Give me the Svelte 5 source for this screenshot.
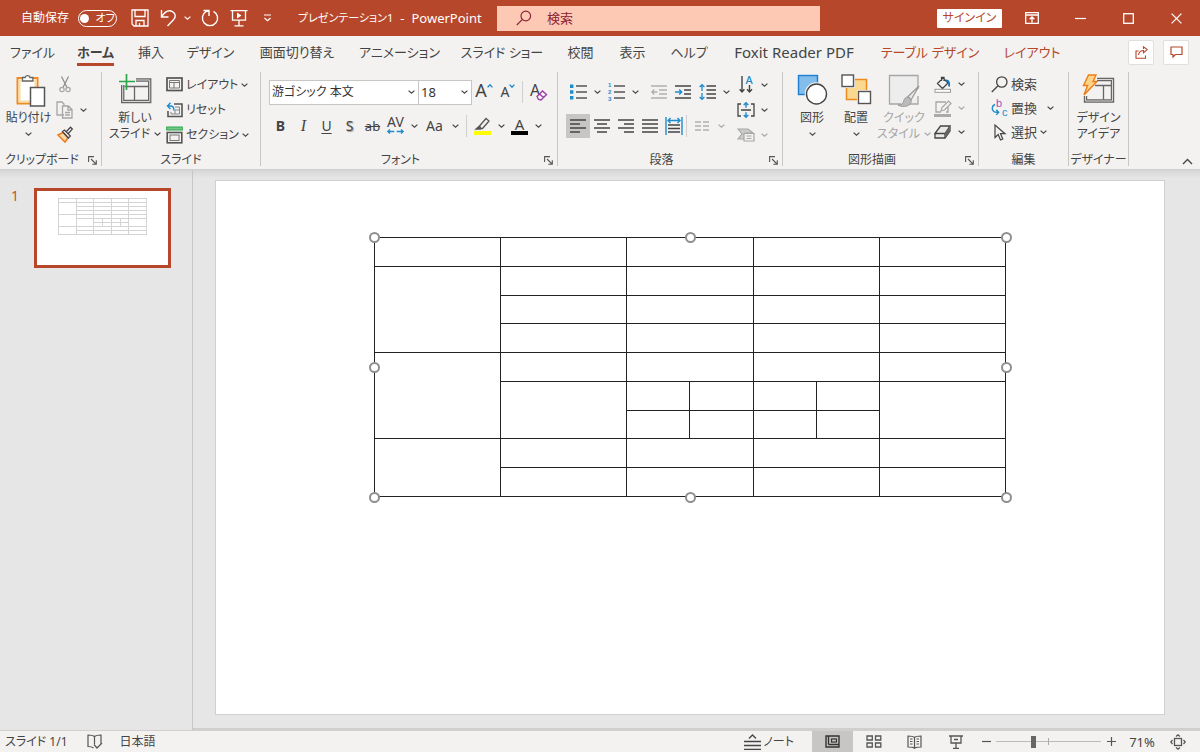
<script>
  const G = '#a6a6a6';
  const B = '#1e8bcd';

  // name: [width, height, inner markup]
  const icons = {
    chev: [7, 4, `<path d="M.6.6l2.9 2.7L6.4.6" stroke="currentColor" stroke-width="1.2"/>`],
    save: [18, 18, `<path d="M1 1h16v16H3l-2-2zM4 1v6.500h10V1M5 17v-5.500h8V17M8.500 17v-3" stroke="#fff" stroke-width="1.300"/>`],
    undo: [17, 18, `<path d="M1.500 1v7h7M1.800 7.700C5 2.500 9 .8 12.500 2.700c3.500 2 3.500 5.500 1 8L7.500 17" stroke="#fff" stroke-width="1.400"/>`],
    redo: [18, 18, `<path d="M2.500 1.500H8v5.500M12.500 2.300A7.600 7.600 0 1 1 5.300 2.400L8 1.500" stroke="#fff" stroke-width="1.400"/>`],
    present: [18, 18, `<path d="M.5 1.700h17M2.500 1.700v9.500h13V1.700M9 11v5.500M4.500 16.800h9" stroke="#fff" stroke-width="1.300"/><path d="M7 3.500v6l4.500-3z" fill="#fff"/>`],
    qat: [9, 8, `<path d="M1 1h7M1.500 4l3 2.700L7.500 4" stroke="#fff" stroke-width="1.200"/>`],
    lens: [16, 16, `<circle cx="9.800" cy="6" r="4.800" stroke="#8c2334" stroke-width="1.200"/><path d="M6.400 9.400L.8 15" stroke="#8c2334" stroke-width="1.200"/>`],
    ribbon: [14, 12, `<path d="M.7.700h12.600v10.600H.7zM.7 3h12.600M7 10.500V5M4.600 7.300L7 4.900l2.400 2.400" stroke="#fff" stroke-width="1.300"/>`],
    min: [11, 11, `<path d="M0 5.500h11" stroke="#fff" stroke-width="1.200"/>`],
    max: [11, 11, `<rect x=".7" y=".7" width="9.600" height="9.600" stroke="#fff" stroke-width="1.300"/>`],
    close: [11, 11, `<path d="M.6.600l9.800 9.800M10.400.600L.6 10.400" stroke="#fff" stroke-width="1.300"/>`],
    share: [13, 13, `<path d="M3.500 5H1v7.300h9.500V9.500M3.500 9C4 6 6 4.500 8.500 4.500V6.800L12.200 3.500 8.500.8V3" stroke="#b7472a" stroke-width="1.100"/>`],
    comment: [13, 12, `<path d="M1 1h11v7.500H5.500L3 11V8.500H1z" stroke="#b7472a" stroke-width="1.200"/>`],
    paste: [31, 34, `<path d="M1.500 4h20v25.500h-20z" fill="#fff" stroke="#f08a24" stroke-width="2"/><path d="M3.500 6.500h16v21h-16z" stroke="#fbdca0" stroke-width="2"/><path d="M6.500 7V3.500h2.700a2.500 2.500 0 0 1 4.800 0h2.900V7z" fill="#fff" stroke="#666" stroke-width="1.300"/><path d="M14.500 13.500h14V32h-14z" fill="#fff" stroke="#555" stroke-width="1.500"/>`],
    cut: [12, 17, `<path d="M2.500.5L8 11.500M9.500.5L4 11.500" stroke="#8a8a8a" stroke-width="1.200"/><circle cx="3" cy="13.500" r="2.200" stroke="${G}" stroke-width="1.200"/><circle cx="9" cy="13.500" r="2.200" stroke="${G}" stroke-width="1.200"/>`],
    copy: [17, 18, `<path d="M8 14H1V1h5l2 2v2" stroke="${G}" stroke-width="1.300"/><path d="M6.500 5h6l3.500 3.500V17H6.500zM12 5v4h4M9 11.500h5M9 14h5" stroke="${G}" stroke-width="1.300"/>`],
    brush: [18, 17, `<path d="M2 9l5-2.500L12 12l-3 4z" fill="#fcd9a8" stroke="#ed7d1a" stroke-width="1.500"/><path d="M6.500 5.500l6 6.500 1.800-2L8.500 4zM10.500 5.500l4-4.200 1.800 1.800-3.800 4.200" fill="#fff" stroke="#444" stroke-width="1.300"/>`],
    newslide: [33, 30, `<path d="M17 6h13.700v21.500h-27V11" stroke="#666" stroke-width="3.400"/><path d="M17 6h13.700v21.500h-27V11" stroke="#d8d8d8" stroke-width="1"/><path d="M5.500 12.500H29M15.500 12.500V26" stroke="#666" stroke-width="1.300"/><path d="M7.500 0v16M0 7.500h16" stroke="#2ba84a" stroke-width="1.700"/>`],
    layout: [17, 15, `<rect x="1" y="1" width="15" height="12.500" stroke="#555" stroke-width="1.700"/><path d="M3.500 5.500h10M3.500 3.500h10v7.500h-10zM8 5.500v5.500" stroke="#777"/>`],
    reset: [17, 16, `<path d="M8 2h8v12.500H2V9" stroke="#555" stroke-width="1.600"/><path d="M9 5h4.500v7H5v-2M9 8h4M9 8v4" stroke="#888"/><path d="M4.500.7L1.500 4l3 3M1.500 4h3C7 4 8 6 8 8.500" stroke="${B}" stroke-width="1.400"/>`],
    section: [17, 18, `<rect x=".7" y="1" width="15.600" height="3" fill="#79c68a" stroke="#2ba84a"/><rect x="1.200" y="6.500" width="14.600" height="10.300" stroke="#555" stroke-width="1.600"/><rect x="4" y="9" width="9" height="5.500" stroke="#777"/>`],
    launch: [9, 9, `<path d="M.6 6V.6H6M3 3l5 5M8.300 4.300v4H4.300" stroke="#555" stroke-width="1.100"/>`],
    up: [6, 4, `<path d="M.6 3.400L3 .8l2.400 2.600" stroke="${B}" stroke-width="1.400"/>`],
    down: [6, 4, `<path d="M.6.600L3 3.200 5.400.6" stroke="${B}" stroke-width="1.400"/>`],
    eraser: [18, 18, `<text x="0" y="12.500" font-size="16" fill="#444">A</text><path d="M7 13.500l5.500-5.500 4 3.500-5.500 5.500-2.500-.5zM9.500 11l4 3.500" fill="#f3f2f1" stroke="#9b3fab" stroke-width="1.400"/>`],
    av: [17, 5, `<path d="M3 .5L.8 2.500 3 4.500M.8 2.500h6.500M14 .5l2.200 2L14 4.500M16.200 2.500H9.700" stroke="${B}" stroke-width="1.300"/>`],
    marker: [18, 18, `<path d="M5.500 9L12 1.500l3 2.500-6.500 7.500H6zM5.500 9L2 12h4.500l1-.7" stroke="#555" stroke-width="1.300"/><path d="M2 12h5V9.500H5z" fill="#555"/><path d="M0 14h17v4H0z" fill="#ff0"/>`],
    bullets: [17, 16, `<path d="M0 .5h3.400v3.400H0zM0 6.300h3.400v3.400H0zM0 12.100h3.400v3.400H0z" fill="${B}"/><path d="M6 2h11M6 8h11M6 14h11" stroke="#555" stroke-width="1.400"/>`],
    numbers: [17, 18, `<g font-family="Liberation Sans, sans-serif" font-size="6" font-weight="700" fill="${B}"><text x="0" y="4">1</text><text x="0" y="11">2</text><text x="0" y="18">3</text></g><path d="M6 3h11M6 9h11M6 15h11" stroke="#555" stroke-width="1.400"/>`],
    outdent: [16, 14, `<path d="M0 1h16M8 5h8M8 9h8M0 13h16M6.500 7H.8M3.300 4.500L.8 7l2.500 2.500" stroke="#b0b0b0" stroke-width="1.300"/>`],
    indent: [16, 14, `<path d="M0 1h16M9 5h7M9 9h7M0 13h16" stroke="#444" stroke-width="1.400"/><path d="M0 7h6.500M4.200 4.500L6.700 7 4.200 9.500" stroke="${B}" stroke-width="1.400"/>`],
    spacing: [17, 16, `<path d="M7.500 2H17M7.500 6H17M7.500 10H17M7.500 14H17" stroke="#444" stroke-width="1.400"/><path d="M3 .8V7M.6 3L3 .7 5.400 3M3 9v6.200M.6 13L3 15.300 5.400 13" stroke="${B}" stroke-width="1.300"/>`],
    vert: [15, 17, `<path d="M3 0v16M.6 13.300L3 16l2.400-2.700M10.500 9v7M8 13.300l2.500 2.700 2.500-2.700" stroke="#444" stroke-width="1.400"/><text x="6.500" y="8" font-size="11" font-weight="500" fill="${B}">A</text>`],
    valign: [18, 16, `<path d="M4 2H1v12h3M14 2h3v12h-3M4 8h10" stroke="#444" stroke-width="1.300"/><path d="M9 .8v5M6.700 3L9 .8 11.300 3M9 15.200v-5M6.700 13L9 15.200 11.300 13" stroke="${B}" stroke-width="1.400"/>`],
    smart: [18, 14, `<path d="M1 1h10l5 4H8v6H1l4-5z" fill="#ccc" stroke="${G}" stroke-width="1.100"/><path d="M7 5.500h10V13H7zM9.500 8h5M9.500 10.500h5" fill="#f3f2f1" stroke="${G}" stroke-width="1.200"/>`],
    left: [16, 16, `<path d="M0 2h16M0 6h10M0 10h16M0 14h10" stroke="#444" stroke-width="1.400"/>`],
    center: [16, 16, `<path d="M0 2h16M3 6h10M0 10h16M3 14h10" stroke="#444" stroke-width="1.400"/>`],
    right: [16, 16, `<path d="M0 2h16M6 6h10M0 10h16M6 14h10" stroke="#444" stroke-width="1.400"/>`],
    justify: [16, 16, `<path d="M0 2h16M0 6h16M0 10h16M0 14h16" stroke="#444" stroke-width="1.400"/>`],
    distribute: [18, 18, `<path d="M1 0v18M17 0v18M3 3.500h12M5.500 1L3 3.500 5.500 6M12.500 1L15 3.500 12.500 6" stroke="${B}" stroke-width="1.400"/><path d="M3 8h12M3 11.500h12M3 15h12" stroke="#444" stroke-width="1.400"/>`],
    columns: [14, 10, `<path d="M0 1h6M8 1h6M0 5h6M8 5h6M0 9h6M8 9h6" stroke="#b0b0b0" stroke-width="1.300"/>`],
    shapes: [31, 32, `<rect x="1.500" y="1.500" width="19" height="19" fill="#83bdec" stroke="#1e7fd0" stroke-width="1.400"/><circle cx="19.500" cy="20" r="10.300" fill="#fff" stroke="#f3f2f1" stroke-width="3"/><circle cx="19.500" cy="20" r="10" fill="#fff" stroke="#444" stroke-width="1.400"/>`],
    arrange: [31, 31, `<rect x="5.500" y="5.500" width="20" height="20" fill="#fbd88f" stroke="#ed8b1c" stroke-width="1.500"/><rect x="0" y="0" width="14" height="14" fill="#f3f2f1"/><rect x="16" y="16" width="15" height="15" fill="#f3f2f1"/><rect x="1" y="1" width="11.500" height="11.500" fill="#fff" stroke="#555" stroke-width="1.400"/><rect x="17.500" y="17.500" width="12" height="12" fill="#fff" stroke="#555" stroke-width="1.400"/>`],
    quick: [32, 33, `<path d="M13 30H1.500V1.500h28.500V15M30 22v8h-9" fill="#ededed" stroke="${G}" stroke-width="1.300"/><path d="M31 12L20 22.500l3 3.500z" fill="#e8e8e8" stroke="#999" stroke-width="1.300"/><path d="M20 23c-4 0-4 4-5 6-1 1.500-3 2-5 2 3 2 10 2 12-1 1.500-2 1.500-3 .5-4.500z" fill="#bbb" stroke="#999"/>`],
    fill: [18, 17, `<path d="M3.500 7.500L9 2l5 5-5.500 5.500zM7.500 5V1.500h2.500V5" stroke="#444" stroke-width="1.300"/><path d="M12 4.500c3 0 3.500 2.500 3 6" stroke="#1874b8" stroke-width="1.800"/><rect x="1" y="13.300" width="15.500" height="3" fill="#fff" stroke="#999"/>`],
    outline: [18, 17, `<path d="M12 2H2v10h5M14 7v5h-2" stroke="${G}" stroke-width="1.300"/><path d="M7 11l1-3.500L14.500 1 17 3.500 10.500 10z" fill="#f3f2f1" stroke="${G}" stroke-width="1.200"/><path d="M0 14h17v3H0z" fill="#aaa"/>`],
    effects: [17, 14, `<path d="M1 8.500L6.500 1H16l-5 7.500zM1 8.500V13h10V8.500zM11 13l5-7V1" fill="#e8e8e8" stroke="#444" stroke-width="1.300"/><path d="M11 8.500L16 1v5l-5 7z" fill="#666"/>`],
    find: [17, 17, `<circle cx="10.800" cy="6" r="5.200" stroke="#444" stroke-width="1.300"/><path d="M7 9.800L.8 16" stroke="#444" stroke-width="1.300"/>`],
    replace: [17, 18, `<g font-family="Liberation Sans, sans-serif" font-size="11"><text x="5" y="8" fill="#ad4bbd">b</text><text x="11" y="17" fill="${B}">c</text></g><path d="M4 5.500C1 6.500.2 10.500 2.800 12.500 4 13.500 5.500 13.300 7.500 13.300M5.300 10.800l2.400 2.500-2.400 2.600" stroke="${B}" stroke-width="1.400"/>`],
    select: [12, 17, `<path d="M1 1v12.500l3.200-3 2.300 5.500 2.300-1L6.500 9.700H11z" stroke="#444" stroke-width="1.200"/>`],
    ideas: [33, 31, `<path d="M15 5.500h15.500v21.500h-27V22" stroke="#666" stroke-width="3.400"/><path d="M15 5.500h15.500v21.500h-27V22" stroke="#d8d8d8" stroke-width="1"/><path d="M13 11.500h16M21.500 11.500V25.500" stroke="#666" stroke-width="1.300"/><path d="M6.500 1h7.500l-3 6.500h4L2 21l3.500-9.500H1.500z" fill="#fcd488" stroke="#ed7d1a" stroke-width="1.400"/>`],
    collapse: [11, 7, `<path d="M1 6l4.500-4.500L10 6" stroke="#444" stroke-width="1.300"/>`],
    proof: [16, 15, `<path d="M7.500 2.500C6 1.200 3.500 1 1 1v11.500c2.500 0 4 .2 5.500 1.500M7.500 2.500V10M7.500 2.500C9 1.200 11.500 1 14 1v8.500M7 10.500l3 3.500 5-5" stroke="#555" stroke-width="1.200"/>`],
    notes: [17, 16, `<path d="M5 4.500L8.500 1 12 4.500M0 7.500h17M0 11.500h17M0 15.300h17" stroke="#444" stroke-width="1.300"/>`],
    normal: [15, 13, `<path d="M1 1h13v11H1zM3.500 1v8.500M3.500 9.500H14" stroke="#333" stroke-width="1.400"/><rect x="6.500" y="4" width="5" height="3" stroke="#333" stroke-width="1.200"/>`],
    sorter: [16, 13, `<path d="M1 1h5.300v4H1zM9.500 1h5.300v4H9.500zM1 8h5.300v4H1zM9.500 8h5.300v4H9.500z" stroke="#555" stroke-width="1.300"/>`],
    reading: [15, 14, `<path d="M7.500 2.500C6 1 3.500 1 1 1v11c2.500 0 5 0 6.500 1.300C9 12 11.500 12 14 12V1c-2.500 0-5 0-6.500 1.500zM7.500 2.500v11M3 4h2.500M3 6.500h2.500M3 9h2.500M9.500 4H12M9.500 6.500H12M9.500 9H12" stroke="#555" stroke-width="1.200"/>`],
    show: [14, 14, `<path d="M0 1h14M2 1v7h10V1M7 8v5M4 13.300h6M5 4.500h4" stroke="#555" stroke-width="1.300"/>`],
    minus: [9, 9, `<path d="M0 4.500h9" stroke="#555" stroke-width="1.200"/>`],
    plus: [9, 9, `<path d="M0 4.500h9M4.500 0v9" stroke="#555" stroke-width="1.200"/>`],
    fit: [16, 16, `<rect x="4.500" y="4.500" width="7" height="7" stroke="#555" stroke-width="1.300"/><path d="M6 2.500L8 .8l2 1.700M6 13.500l2 1.700 2-1.700M2.500 6L.8 8l1.700 2M13.500 6l1.700 2-1.700 2" stroke="#555" stroke-width="1.200"/>`]
  };

  const tabs = ['ファイル', 'ホーム', '挿入', 'デザイン', '画面切り替え', 'アニメーション', 'スライド ショー', '校閲', '表示', 'ヘルプ', 'Foxit Reader PDF', 'テーブル デザイン', 'レイアウト'];

  // [column span, row span] of every cell, row by row
  const full = [[1, 1], [2, 1], [2, 1], [1, 1]];
  const rows = [
    [[1, 1], ...full],
    [[1, 3], ...full],
    full,
    full,
    [[1, 3], ...full],
    [[1, 2], [1, 1], [1, 1], [1, 1], [1, 1], [1, 2]],
    [[1, 1], [1, 1], [1, 1], [1, 1]],
    [[1, 2], ...full],
    full
  ];
  const handles = ['nw', 'n', 'ne', 'w', 'e', 'sw', 's', 'se'];
  let zoom = $state(35);
</script>

{#snippet ico(name)}
  <span class="ico" aria-hidden="true">{@html `<svg width="${icons[name][0]}" height="${icons[name][1]}" viewBox="0 0 ${icons[name][0]} ${icons[name][1]}" fill="none">${icons[name][2]}</svg>`}</span>
{/snippet}

{#snippet drop(label, off = false)}
  <button class="drop" class:off aria-label={label}>{@render ico('chev')}</button>
{/snippet}

{#snippet tool(name, label)}
  <button class="tool" aria-label={label}>{@render ico(name)}</button>
{/snippet}

{#snippet foot(label, launcher)}
  <footer><h2>{label}</h2>{#if launcher}<button class="launch" aria-label="{label}の設定">{@render ico('launch')}</button>{/if}</footer>
{/snippet}

{#snippet grid()}
  <table aria-label="表">
    <colgroup><col class="wide" /><col class="wide" /><col /><col /><col /><col /><col class="wide" /></colgroup>
    <tbody>
      {#each rows as row}
        <tr>{#each row as [c, r]}<td colspan={c} rowspan={r}></td>{/each}</tr>
      {/each}
    </tbody>
  </table>
{/snippet}

<div class="app">
  <header class="titlebar">
    <div class="quick">
      <span class="auto" id="autosave">自動保存</span>
      <button class="switch" role="switch" aria-checked="false" aria-labelledby="autosave"><i></i>オフ</button>
      <button class="q save" aria-label="上書き保存">{@render ico('save')}</button>
      <button class="q" aria-label="元に戻す">{@render ico('undo')}</button>
      <button class="q thin" aria-label="元に戻す履歴">{@render ico('chev')}</button>
      <button class="q" aria-label="やり直し">{@render ico('redo')}</button>
      <button class="q" aria-label="最初から">{@render ico('present')}</button>
      <button class="q" aria-label="ツール バーのカスタマイズ">{@render ico('qat')}</button>
      <h1><span class="doc">プレゼンテーション1</span><span>-</span><span>PowerPoint</span></h1>
    </div>
    <label class="search">{@render ico('lens')}<input type="text" placeholder="検索" aria-label="検索" /></label>
    <div class="window">
      <button class="signin">サインイン</button>
      <button aria-label="リボンの表示オプション">{@render ico('ribbon')}</button>
      <button aria-label="最小化">{@render ico('min')}</button>
      <button aria-label="最大化">{@render ico('max')}</button>
      <button aria-label="閉じる">{@render ico('close')}</button>
    </div>
  </header>

  <nav>
    <div class="tabs">
      {#each tabs as tab, i}
        <button class:active={i === 1} class:latin={i === 10} class:context={i > 10}><span>{tab}</span></button>
      {/each}
    </div>
    <button class="card" aria-label="共有">{@render ico('share')}</button>
    <button class="card" aria-label="コメント">{@render ico('comment')}</button>
  </nav>

  <div class="ribbon">
    <section class="clipboard">
      <div class="body">
        <button class="big">{@render ico('paste')}<span>貼り付け</span><span>{@render ico('chev')}</span></button>
        <div class="stack">
          <div>{@render tool('cut', '切り取り')}</div>
          <div>{@render tool('copy', 'コピー')}{@render drop('コピーのオプション')}</div>
          <div>{@render tool('brush', '書式のコピー')}</div>
        </div>
      </div>
      {@render foot('クリップボード', true)}
    </section>

    <section class="slides">
      <div class="body">
        <button class="big">{@render ico('newslide')}<span>新しい</span><span>スライド {@render ico('chev')}</span></button>
        <div class="stack">
          <button class="line">{@render ico('layout')}レイアウト{@render ico('chev')}</button>
          <button class="line">{@render ico('reset')}リセット</button>
          <button class="line">{@render ico('section')}セクション{@render ico('chev')}</button>
        </div>
      </div>
      {@render foot('スライド', false)}
    </section>

    <section class="font">
      <div class="body two">
        <div class="row">
          <span class="combo name"><select aria-label="フォント"><option>游ゴシック 本文</option></select>{@render ico('chev')}</span>
          <span class="combo size"><select aria-label="フォント サイズ"><option>18</option></select>{@render ico('chev')}</span>
          <button class="grow" aria-label="フォント サイズの拡大">A{@render ico('up')}</button>
          <button class="grow small" aria-label="フォント サイズの縮小">A{@render ico('down')}</button>
          <hr />
          {@render tool('eraser', '書式のクリア')}
        </div>
        <div class="row letters">
          <button class="tool"><b>B</b></button>
          <button class="tool"><i class="it">I</i></button>
          <button class="tool"><u>U</u></button>
          <button class="tool"><span class="shadow">S</span></button>
          <button class="tool"><s>ab</s></button>
          <button class="tool av">AV{@render ico('av')}</button>
          {@render drop('文字の間隔')}
          <button class="tool aa">Aa</button>
          {@render drop('文字種の変換')}
          <hr />
          {@render tool('marker', '蛍光ペンの色')}
          {@render drop('蛍光ペンの色の選択')}
          <button class="tool ink">A<i></i></button>
          {@render drop('フォントの色の選択')}
        </div>
      </div>
      {@render foot('フォント', true)}
    </section>

    <section class="para">
      <div class="body">
        <div class="two">
          <div class="row">
            {@render tool('bullets', '箇条書き')}{@render drop('箇条書きの種類')}
            {@render tool('numbers', '段落番号')}{@render drop('段落番号の種類')}
            <span class="gap"></span>
            {@render tool('outdent', 'インデントを減らす')}{@render tool('indent', 'インデントを増やす')}
            {@render tool('spacing', '行間')}{@render drop('行間の種類')}
          </div>
          <div class="row aligns">
            <button class="tool on" aria-label="左揃え" aria-pressed="true">{@render ico('left')}</button>
            {@render tool('center', '中央揃え')}{@render tool('right', '右揃え')}{@render tool('justify', '両端揃え')}{@render tool('distribute', '均等割り付け')}
            <hr />
            {@render tool('columns', '段の追加または削除')}{@render drop('段の種類', true)}
          </div>
        </div>
        <div class="stack">
          <div>{@render tool('vert', '文字列の方向')}{@render drop('文字列の方向の種類')}</div>
          <div>{@render tool('valign', '文字の配置')}{@render drop('文字の配置の種類')}</div>
          <div>{@render tool('smart', 'SmartArt に変換')}{@render drop('SmartArt の種類', true)}</div>
        </div>
      </div>
      {@render foot('段落', true)}
    </section>

    <section class="draw">
      <div class="body">
        <button class="big">{@render ico('shapes')}<span>図形</span><span>{@render ico('chev')}</span></button>
        <button class="big">{@render ico('arrange')}<span>配置</span><span>{@render ico('chev')}</span></button>
        <button class="big quickstyle" disabled>{@render ico('quick')}<span>クイック</span><span>スタイル {@render ico('chev')}</span></button>
        <div class="stack">
          <div>{@render tool('fill', '図形の塗りつぶし')}{@render drop('塗りつぶしの色')}</div>
          <div>{@render tool('outline', '図形の枠線')}{@render drop('枠線の色', true)}</div>
          <div>{@render tool('effects', '図形の効果')}{@render drop('効果の種類')}</div>
        </div>
      </div>
      {@render foot('図形描画', true)}
    </section>

    <section class="edit">
      <div class="body">
        <div class="stack">
          <button class="line">{@render ico('find')}検索</button>
          <button class="line far">{@render ico('replace')}置換{@render ico('chev')}</button>
          <button class="line">{@render ico('select')}選択{@render ico('chev')}</button>
        </div>
      </div>
      {@render foot('編集', false)}
    </section>

    <section class="ideas">
      <div class="body">
        <button class="big">{@render ico('ideas')}<span>デザイン</span><span>アイデア</span></button>
      </div>
      {@render foot('デザイナー', false)}
    </section>
    <button class="fold" aria-label="リボンを折りたたむ">{@render ico('collapse')}</button>
  </div>

  <main>
    <aside>
      <span class="num">1</span>
      <div class="thumb">{@render grid()}</div>
    </aside>
    <div class="stage">
      <div class="slide">
        <div class="frame">
          {@render grid()}
          {#each handles as h}<i class="handle {h}"></i>{/each}
        </div>
      </div>
    </div>
  </main>

  <div class="status">
    <span>スライド 1/1</span>
    <button class="proof" aria-label="スペル チェック">{@render ico('proof')}</button>
    <span>日本語</span>
    <div class="views">
      <button class="notes">{@render ico('notes')}ノート</button>
      <button class="view on" aria-label="標準" aria-pressed="true">{@render ico('normal')}</button>
      <button class="view" aria-label="スライド一覧">{@render ico('sorter')}</button>
      <button class="view" aria-label="閲覧表示">{@render ico('reading')}</button>
      <button class="view" aria-label="スライド ショー">{@render ico('show')}</button>
      <button class="step" aria-label="縮小">{@render ico('minus')}</button>
      <input type="range" min="0" max="100" bind:value={zoom} aria-label="ズーム" />
      <button class="step" aria-label="拡大">{@render ico('plus')}</button>
      <button class="percent">71%</button>
      <button class="fit" aria-label="ウィンドウに合わせる">{@render ico('fit')}</button>
    </div>
  </div>
</div>

<style>
  :global(body) { margin: 0; }
  * { box-sizing: border-box; }
  .app {
    display: flex; flex-direction: column; min-height: 100vh;
    background: #f3f2f1; color: #444;
    font: 12px/16px "Noto Sans", "Noto Sans CJK JP", sans-serif;
    font-feature-settings: "palt";
  }
  button { padding: 0; border: 0; background: none; color: inherit; font: inherit; font-feature-settings: inherit; white-space: nowrap; }
  button, .ico { display: inline-flex; align-items: center; justify-content: center; }
  .ico { flex: none; }
  .ico :global(svg) { display: block; overflow: visible; }
  hr { width: 1px; height: 22px; margin: 0; border: 0; background: #d2d0ce; flex: none; }
  h1, h2 { margin: 0; font: inherit; }

  .titlebar { display: grid; grid-template-columns: 497px minmax(160px, 1fr) 380px; height: 36px; background: #b7472a; color: #fff; align-items: center; }
  .quick { display: flex; align-items: center; padding-left: 21px; white-space: nowrap; }
  .auto { width: 57px; }
  .switch { width: 39px; height: 17px; border: 1px solid #fff; border-radius: 9px; gap: 6px; font-size: 11px; }
  .switch i { width: 9px; height: 9px; border-radius: 50%; background: #fff; }
  .q { width: 29px; height: 28px; }
  .save { margin-left: 8px; }
  .thin { width: 8px; margin-right: 4px; }
  h1 { display: flex; gap: 7px; margin-left: 16px; font-size: 13px; }
  .doc { font-size: 11px; }
  .search { display: flex; align-items: center; height: 25px; padding-left: 19px; gap: 15px; background: #fdc9b5; }
  .search input { flex: 1; min-width: 0; border: 0; padding: 0; background: none; outline: 0; font: inherit; font-size: 13px; color: #8c2334; }
  .search input::placeholder { color: #8c2334; opacity: 1; }
  .window { display: flex; justify-content: flex-end; align-items: center; }
  .window button { width: 48px; height: 36px; }
  .window .signin { width: 65px; height: 19px; margin-right: 6px; background: #fff; color: #b7472a; border-radius: 1px; }

  nav { display: flex; align-items: center; height: 32px; padding-right: 11px; gap: 9px; }
  .tabs { flex: 1; display: grid; grid-template-columns: 65px 61px 50px 69px 104px 101px 104px 53px 51px 62px 148px 124px 80px; font-size: 13px; line-height: 20px; }
  .tabs button { height: 30px; }
  .tabs span { border-bottom: 3px solid transparent; padding: 3px 0 1px; }
  .tabs .active { font-weight: 700; }
  .tabs .active span { border-color: #b7472a; }
  .tabs .latin { font-size: 15px; }
  .tabs .context { color: #b7472a; }
  .card { width: 26px; height: 25px; background: #fff; border: 1px solid #e1dfdd; border-radius: 2px; }

  .ribbon { display: flex; height: 102px; padding-top: 4px; border-bottom: 1px solid #d2d0ce; }
  section { display: flex; flex-direction: column; flex: none; height: 94px; border-right: 1px solid #c8c6c4; }
  .body { display: flex; flex: 1; min-height: 0; }
  footer { display: flex; align-items: center; height: 16px; margin-bottom: -2px; }
  footer h2 { flex: 1; text-align: center; white-space: nowrap; }
  .launch { width: 17px; }
  .big { flex-direction: column; justify-content: flex-start; height: 72px; padding-top: 2px; }
  .big > .ico { height: 36px; align-items: flex-start; }
  .big > span:not(.ico) { display: flex; align-items: center; justify-content: center; gap: 4px; height: 16px; }
  .big:disabled { color: #a6a6a6; }
  .stack { display: grid; grid-template-rows: repeat(3, 25px); align-content: start; }
  .stack > div { display: flex; align-items: center; }
  .line { justify-content: flex-start; gap: 4px; }
  .tool { width: 23px; height: 24px; }
  .drop { width: 14px; height: 24px; }
  .off { color: #a6a6a6; }
  .row { display: flex; align-items: center; height: 34px; }
  .two { display: flex; flex-direction: column; padding-top: 3px; }

  .clipboard { width: 102px; }
  .clipboard .body { padding-left: 5px; }
  .clipboard .big { width: 47px; }
  .clipboard .big > .ico { padding-left: 6px; }
  .clipboard .tool { width: 25px; }
  .clipboard .drop { width: 12px; }

  .slides { width: 159px; }
  .slides .body { padding-left: 6px; }
  .slides .big { width: 54px; margin-right: 4px; }
  .slides .line { gap: 3px; }

  .font { width: 297px; }
  .font .body { padding-left: 8px; }
  .combo { display: grid; grid-template-columns: 1fr 13px; align-items: center; height: 25px; background: #fff; border: 1px solid #c8c6c4; }
  .name { width: 150px; }
  .size { width: 53px; border-left: 0; }
  .combo select { grid-area: 1 / 1 / 2 / 3; height: 23px; border: 0; padding: 0 2px; background: none; appearance: none; font: inherit; font-feature-settings: inherit; color: #333; }
  .size select { font-size: 13px; }
  .combo > .ico { grid-area: 1 / 2; pointer-events: none; }
  .grow { width: 24px; height: 24px; align-items: flex-start; font-size: 18px; line-height: 20px; }
  .grow .ico { padding-top: 4px; }
  .small { font-size: 14px; line-height: 24px; }
  .font .row:first-child hr { margin: 0 4px 0 2px; }
  .letters { font-size: 14px; line-height: 20px; }
  .it { font-family: "Liberation Serif", serif; font-size: 16px; }
  .letters u { text-underline-offset: 2px; }
  .shadow { text-shadow: 1px 1px 1px #999; }
  .letters s { font-size: 13px; text-decoration: line-through 1px #444; }
  .av { flex-direction: column; line-height: 14px; padding-bottom: 3px; }
  .aa { width: 27px; }
  .letters hr { margin: 0 4px; }
  .ink { flex-direction: column; line-height: 14px; font-size: 15px; }
  .ink i { width: 17px; height: 4px; background: #000; }

  .para { width: 225px; }
  .para .body { padding-left: 8px; }
  .para .two { width: 169px; }
  .para .two .tool { width: 24px; }
  .gap { width: 5px; }
  .on { background: #c8c6c4; }
  .aligns hr { margin: 0 3px 0 0; }
  .para .tool { width: 22px; }

  .draw { width: 196px; }
  .draw .body { padding-left: 7px; }
  .draw .big { width: 44px; }
  .draw .quickstyle { width: 52px; }
  .draw .stack, .edit .stack { grid-template-rows: repeat(3, 24px); }
  .draw .stack { margin-left: 1px; }

  .edit { width: 90px; }
  .edit .body { padding-left: 12px; }
  .edit .line { font-size: 13px; gap: 3px; }
  .edit .line > .ico:first-child { width: 17px; }
  .edit .far .ico:last-child { margin-left: 7px; }

  .ideas { width: 60px; }
  .ideas .body { justify-content: center; }
  .fold { margin: auto 7px 3px auto; width: 12px; height: 10px; }

  main { flex: 1; display: grid; grid-template-columns: 193px 1fr; background: linear-gradient(#d6d6d6, #e6e6e6 8px); }
  aside { display: grid; grid-template-columns: 23px 137px; align-content: start; padding: 18px 0 0 11px; border-right: 1px solid #c6c6c6; }
  .num { color: #c8502f; font-size: 14px; }
  .thumb { height: 80px; padding: 7px 0 0 21px; border: 3px solid #b7472a; background: #fff; }
  .thumb table { width: 89px; height: 37px; }
  .thumb td { height: 4px; border: 1px solid #d4d4d4; }
  .stage { padding: 10px 35px 12px 22px; border-bottom: 2px solid #cfcfcf; }
  .slide { aspect-ratio: 950 / 535; padding: 56px 16.600% 0; background: #fff; border: 1px solid #d0d0d0; }
  .frame { position: relative; }
  table { width: 100%; height: 260px; table-layout: fixed; border-collapse: collapse; }
  col { width: 10%; }
  .wide { width: 20%; }
  td { height: 28px; padding: 0; border: 1px solid #222; font-size: 0; line-height: 0; }
  .handle { position: absolute; width: 11px; height: 11px; margin: -5px; border: 2px solid #8f8f8f; border-radius: 50%; background: #fff; left: 50%; top: 50%; }
  .nw, .w, .sw { left: 0; }
  .ne, .e, .se { left: 100%; }
  .nw, .n, .ne { top: 0; }
  .sw, .s, .se { top: 100%; }

  .status { display: flex; align-items: center; height: 22px; padding-left: 5px; border-top: 1px solid #d2d0ce; white-space: nowrap; }
  .proof { margin: 0 17px 0 19px; }
  .views { display: flex; align-items: center; margin-left: auto; height: 21px; }
  .notes { gap: 2px; margin-right: 18px; }
  .view { width: 41px; height: 21px; }
  .step { width: 20px; height: 20px; }
  input[type='range'] { appearance: none; width: 105px; height: 12px; margin: 0; background: linear-gradient(#aaa, #aaa) center / 1px 7px no-repeat, linear-gradient(#bbb, #bbb) center / 100% 1px no-repeat; }
  input[type='range']::-webkit-slider-thumb { appearance: none; width: 5px; height: 12px; background: #666; }
  .percent { width: 42px; font-size: 13px; }
  .fit { width: 45px; margin-left: -8px; }
</style>
